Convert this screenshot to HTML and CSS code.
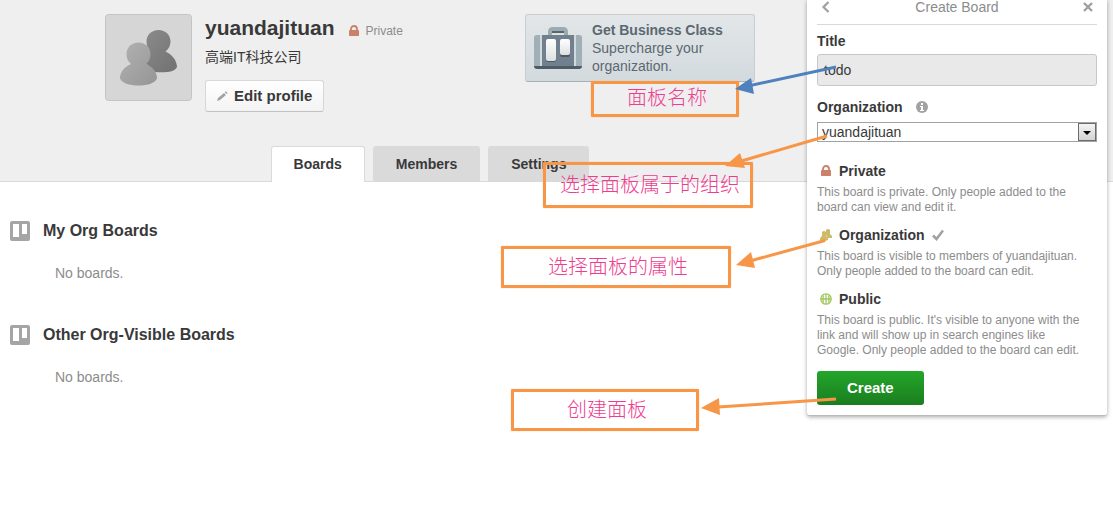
FILE: index.html
```html
<!DOCTYPE html>
<html lang="en">
<head>
<meta charset="utf-8">
<title>yuandajituan</title>
<link rel="stylesheet" href="styles.css">
</head>
<body>
<header class="header">
  <div class="profile">
    <svg class="avatar" viewBox="0 0 87 87" aria-hidden="true">
      <defs>
        <linearGradient id="back" x1="0" y1="0" x2="1" y2="1"><stop offset="0" stop-color="#8c8c8c"/><stop offset="1" stop-color="#717171"/></linearGradient>
        <linearGradient id="front" x1="0" y1="0" x2="1" y2="1"><stop offset="0" stop-color="#b2b2b2"/><stop offset="1" stop-color="#959595"/></linearGradient>
      </defs>
      <rect x=".5" y=".5" width="86" height="86" rx="3" fill="#d6d6d6" stroke="#c4c4c4"/>
      <path d="M53.500 16C60.500 16 65.500 21 65.500 27.500C65.500 32 63.500 35 60.500 37.500C67 40 72 47 72 53C70 58 60 59 50 58L36 45L45 37.500C43 35 41.500 32 41.500 27.500C41.500 21 46.500 16 53.500 16Z" fill="url(#back)"/>
      <path d="M33.500 28.500C40.500 28.500 45.500 33.500 45.500 40C45.500 44.500 44 47.500 41 50C48 53 52 58.500 52 64C50 74 17 74 15 64C15 58.500 19 53 26 50C23 47.500 21.500 44.500 21.500 40C21.500 33.500 26.500 28.500 33.500 28.500Z" fill="url(#front)"/>
    </svg>
    <div class="details">
      <div class="name-row">
        <h1>yuandajituan</h1>
        <span class="visibility">
          <svg width="12" height="12" viewBox="0 0 12 12" aria-hidden="true"><path d="M3 5V4a3 3 0 0 1 6 0v1" fill="none" stroke="#ca8069" stroke-width="1.800"/><rect x="1" y="5" width="10" height="6" rx=".7" fill="#ca8069"/></svg>
          Private
        </span>
      </div>
      <p class="about">高端IT科技公司</p>
      <button class="edit" type="button">
        <svg width="12" height="12" viewBox="0 0 12 12" aria-hidden="true"><path d="M1 11l1-3 6-5 2 2-6 5zM8.700 2.300l1-1 2 1.800-1 1z" fill="#a2a2a2"/></svg>
        Edit profile
      </button>
    </div>
    <a class="business" href="#">
      <svg width="48" height="43" viewBox="0 0 48 43" aria-hidden="true">
        <defs><linearGradient id="pocket" x1="0" y1="0" x2="0" y2="1"><stop offset="0" stop-color="#fff"/><stop offset="1" stop-color="#dcdfe2"/></linearGradient></defs>
        <path d="M16 9V5q0-3 3-3h10q3 0 3 3v4" fill="none" stroke="#9caab2" stroke-width="4"/>
        <path d="M18 4h12v2H18z" fill="#57656d"/>
        <rect y="9" width="48" height="33" rx="3" fill="#4f5c65"/>
        <path d="M3 8h42q3 0 3 3v28H0V11q0-3 3-3z" fill="#a1afb7"/>
        <path d="M8 8h32v31H8z" fill="#71808e"/>
        <path d="M6 8h2v31H6zM40 8h2v31h-2z" fill="#d3dade"/>
        <rect x="12" y="13" width="10" height="22" rx="2" fill="#4e5960"/><rect x="26" y="13" width="10" height="17" rx="2" fill="#4e5960"/>
        <rect x="12" y="12" width="10" height="22" rx="2" fill="url(#pocket)"/><rect x="26" y="12" width="10" height="16" rx="2" fill="url(#pocket)"/>
      </svg>
      <span><strong>Get Business Class</strong><br>Supercharge your organization.</span>
    </a>
  </div>
  <nav class="tabs">
    <a class="tab active" href="#">Boards</a>
    <a class="tab" href="#">Members</a>
    <a class="tab" href="#">Settings</a>
  </nav>
</header>

<main class="boards">
  <section>
    <h2><svg width="20" height="20" viewBox="0 0 20 20" aria-hidden="true"><path fill-rule="evenodd" d="M2 0h16q2 0 2 2v16q0 2-2 2H2q-2 0-2-2V2q0-2 2-2zM3 3v13h6V3zM12 3v10h5V3z" fill="#a5a5a5"/></svg>My Org Boards</h2>
    <p>No boards.</p>
  </section>
  <section>
    <h2><svg width="20" height="20" viewBox="0 0 20 20" aria-hidden="true"><path fill-rule="evenodd" d="M2 0h16q2 0 2 2v16q0 2-2 2H2q-2 0-2-2V2q0-2 2-2zM3 3v13h6V3zM12 3v10h5V3z" fill="#a5a5a5"/></svg>Other Org-Visible Boards</h2>
    <p>No boards.</p>
  </section>
</main>

<form class="popover">
  <div class="popover-head">
    <button type="button" aria-label="Back"><svg width="18" height="12" viewBox="0 0 18 12"><path d="M11.500 1L6.500 6l5 5" fill="none" stroke="#a0a0a0" stroke-width="2.200"/></svg></button>
    <span>Create Board</span>
    <button type="button" aria-label="Close"><svg width="18" height="12" viewBox="0 0 18 12"><path d="M5 2l8 8M13 2l-8 8" stroke="#a0a0a0" stroke-width="2.400"/></svg></button>
  </div>
  <label class="label" for="title">Title</label>
  <input class="title-input" id="title" type="text" value="todo">
  <div class="label org-label">
    <label for="org">Organization</label>
    <svg width="12" height="12" viewBox="0 0 12 12" aria-hidden="true"><circle cx="6" cy="6" r="6" fill="#a2a2a2"/><path d="M5 2h2v2H5zM4 5h3v4h1v1H4V9h1V6H4z" fill="#fff"/></svg>
  </div>
  <div class="select-wrap">
    <select id="org"><option>yuandajituan</option></select>
    <svg class="select-arrow" width="18" height="18" viewBox="0 0 18 18" aria-hidden="true"><defs><linearGradient id="btn" x1="0" y1="0" x2="0" y2="1"><stop offset="0" stop-color="#f5f5f5"/><stop offset="1" stop-color="#d2d2d2"/></linearGradient></defs><rect x=".5" y=".5" width="17" height="17" fill="url(#btn)" stroke="#6c6c6c"/><path d="M5 8h8l-4 4z" fill="#000"/></svg>
  </div>
  <ul class="options">
    <li>
      <a href="#"><svg width="12" height="12" viewBox="0 0 12 12" aria-hidden="true"><path d="M3 5V4a3 3 0 0 1 6 0v1" fill="none" stroke="#ca8069" stroke-width="1.800"/><rect x="1" y="5" width="10" height="6" rx=".7" fill="#ca8069"/></svg>Private</a>
      <p>This board is private. Only people added to the board can view and edit it.</p>
    </li>
    <li>
      <a href="#"><svg width="12" height="12" viewBox="0 0 12 12" aria-hidden="true"><path d="M6 1q2-2 4 0v4l2 2v2H8L6 6zM2 3q2-2 4 0v4l2 2v2q-4 2-8 0V9l2-2z" fill="#cdb968"/></svg>Organization<svg width="12" height="12" viewBox="0 0 12 12" aria-label="Selected"><path d="M1 6.500L4.500 10 11 1.500" fill="none" stroke="#a2a2a2" stroke-width="2.600"/></svg></a>
      <p>This board is visible to members of yuandajituan. Only people added to the board can edit.</p>
    </li>
    <li>
      <a href="#"><svg width="12" height="12" viewBox="0 0 12 12" aria-hidden="true"><g fill="none" stroke="#a1c65c" stroke-width="1.300"><circle cx="6" cy="6" r="5.200"/><path d="M6 1v10M1 6h10M3.500 2.500q-1.500 3.500 0 7M8.500 2.500q1.500 3.500 0 7"/></g></svg>Public</a>
      <p>This board is public. It's visible to anyone with the link and will show up in search engines like Google. Only people added to the board can edit.</p>
    </li>
  </ul>
  <button class="create" type="submit">Create</button>
</form>

<div class="notes">
  <div class="note note-name">面板名称</div>
  <div class="note note-org">选择面板属于的组织</div>
  <div class="note note-type">选择面板的属性</div>
  <div class="note note-create">创建面板</div>
  <svg class="arrows" width="840" height="420" viewBox="0 0 840 420" aria-hidden="true">
    <g stroke="#4f81bd" fill="#4f81bd"><path d="M836 67L748 86" stroke-width="3"/><path d="M735 89l16-11 3 16z" stroke="none"/></g>
    <g stroke="#f79646" fill="#f79646" stroke-width="3">
      <path d="M827 136L738 162"/><path d="M725 166l15-13 5 15z" stroke="none"/>
      <path d="M825 240.500L750 261"/><path d="M736 265l15-13 4 16z" stroke="none"/>
      <path d="M836 399L718 407"/><path d="M701 408l18-10 1 17z" stroke="none"/>
    </g>
  </svg>
</div>
</body>
</html>
```
FILE: styles.css
```css
* { box-sizing: border-box; }
body {
  margin: 0;
  min-height: 100vh;
  background: #fff;
  color: #393939;
  font: 14px/18px "Liberation Sans", Arial, "Noto Sans CJK SC", sans-serif;
  position: relative;
}
h1, h2, p, ul { margin: 0; padding: 0; }
a { color: inherit; text-decoration: none; }
svg { flex: none; }
button, input, select { font: inherit; color: inherit; }

.header {
  background: #efefef;
  border-bottom: 1px solid #d9d9d9;
  padding: 14px 253px 0 0;
}
.profile {
  display: flex;
  align-items: flex-start;
  max-width: 650px;
  height: 132px;
  margin: 0 auto;
}
.avatar { width: 87px; height: 87px; margin-right: 13px; }
.details { flex: 1; }
.name-row { display: flex; align-items: center; gap: 13px; }
h1 { font-size: 21px; line-height: 28px; }
.visibility {
  display: flex;
  align-items: center;
  gap: 6px;
  padding-top: 5px;
  color: #8c8c8c;
  font-size: 12px;
}
.about { line-height: 20px; padding-top: 5px; }
.edit {
  display: flex;
  align-items: center;
  gap: 6px;
  height: 32px;
  margin-top: 13px;
  padding: 0 11px 0 10px;
  border: 1px solid #d7d7d7;
  border-bottom-color: #c2c2c2;
  border-radius: 3px;
  background: linear-gradient(#fff, #f3f3f3);
  font-size: 15px;
  font-weight: bold;
}
.business {
  display: flex;
  gap: 10px;
  width: 230px;
  height: 68px;
  padding: 6px 8px;
  border: 1px solid #c9cdd0;
  border-bottom-color: #a9b0b4;
  border-radius: 3px;
  background: linear-gradient(#e2e6e9, #d3dadd);
  color: #5b6870;
}
.business svg { margin-top: 6px; }

.tabs { display: flex; justify-content: center; gap: 8px; }
.tab {
  height: 35px;
  padding: 8px 22px;
  border: 1px solid #dadada;
  border-bottom: 0;
  border-radius: 3px 3px 0 0;
  background: #dadada;
  font-weight: bold;
}
.active { background: #fff; height: 36px; margin-bottom: -1px; }

.boards { display: grid; gap: 50px; padding: 39px 253px 0 10px; }
h2 { display: flex; align-items: center; gap: 13px; font-size: 16px; line-height: 20px; }
.boards p { padding: 23px 0 0 45px; color: #8c8c8c; }
.boards section { height: 54px; }

.popover {
  position: absolute;
  top: 0;
  right: 6px;
  width: 300px;
  padding: 0 10px 10px;
  background: #fff;
  border-bottom: 1px solid #b9b9b9;
  border-radius: 0 0 3px 3px;
  box-shadow: 0 1px 4px rgba(0, 0, 0, .35);
}
.popover-head {
  display: flex;
  align-items: center;
  justify-content: space-between;
  height: 25px;
  padding-bottom: 11px;
  border-bottom: 1px solid #d9d9d9;
  color: #8c8c8c;
}
.popover-head button { display: flex; padding: 0; border: 0; background: none; }
.label { display: block; margin: 7px 0 4px; font-weight: bold; }
.title-input {
  display: block;
  width: 100%;
  height: 32px;
  padding: 0 6px;
  border: 1px solid #c7c7c7;
  border-radius: 3px;
  background: #e9e9e9;
}
.org-label { display: flex; align-items: center; gap: 13px; margin: 12px 0 6px; }
.select-wrap { position: relative; }
select {
  display: block;
  width: 100%;
  height: 20px;
  padding: 0 4px;
  border: 1px solid #a2a2a2;
  border-radius: 0;
  background: #fff;
  appearance: none;
}
.select-arrow { position: absolute; top: 1px; right: 1px; pointer-events: none; }
.options { display: grid; gap: 11px; margin-top: 20px; list-style: none; }
.options a { display: flex; align-items: center; gap: 7px; padding-left: 3px; font-weight: bold; }
.options p { margin-top: 5px; padding-right: 8px; color: #8c8c8c; font-size: 12px; line-height: 15px; }
.create {
  display: block;
  height: 34px;
  margin-top: 13px;
  padding: 0 30px;
  border: 0;
  border-radius: 3px;
  background: linear-gradient(#24a62a, #1b7d1f);
  color: #fff;
  font-size: 15px;
  font-weight: bold;
}

.notes { position: absolute; top: 0; left: 0; pointer-events: none; }
.note {
  position: absolute;
  display: flex;
  justify-content: center;
  border: 3px solid #f79646;
  border-radius: 1px;
  box-shadow: 0 0 1px #f79646;
  color: #ee3d8f;
  font: 300 20px/26px "Noto Sans CJK SC", sans-serif;
}
.note-name { left: 591px; top: 81px; width: 148px; height: 36px; padding-left: 4px; }
.note-org { left: 543px; top: 162px; width: 210px; height: 46px; padding: 6px 0 0 4px; }
.note-type { left: 501px; top: 246px; width: 230px; height: 42px; padding: 4px 0 0 4px; }
.note-create { left: 511px; top: 389px; width: 188px; height: 42px; padding: 4px 0 0 4px; }
.arrows { position: absolute; top: 0; left: 0; }
```
